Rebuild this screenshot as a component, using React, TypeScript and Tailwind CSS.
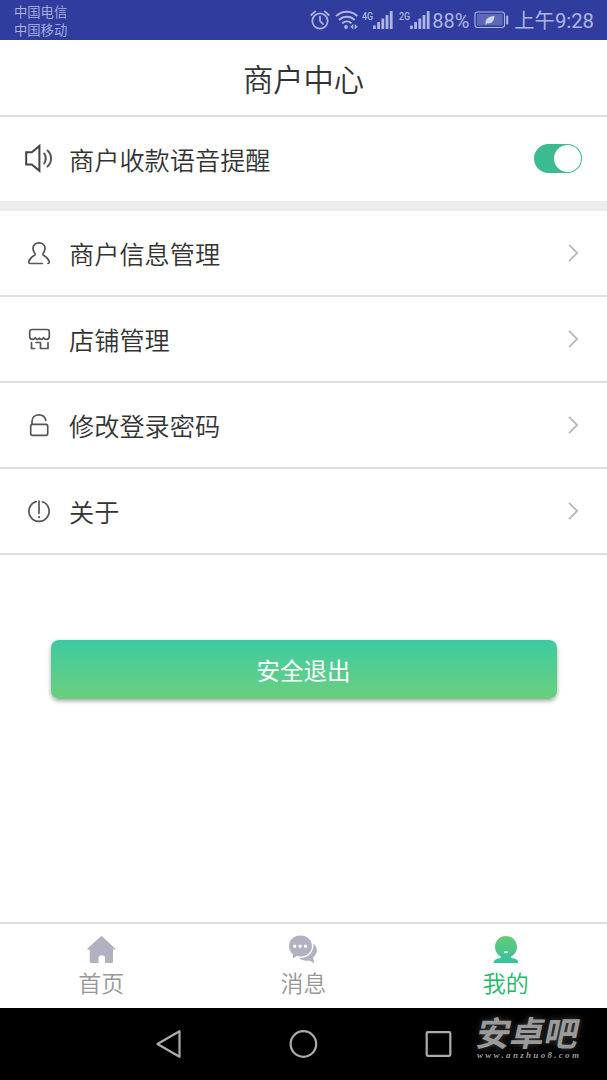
import type { ReactNode } from "react";

interface IconProps {
  children: ReactNode;
}

const RowIcon = ({ children }: IconProps) => (
  <svg
    width="30"
    height="31"
    viewBox="0 0 30 31"
    fill="none"
    stroke="#555"
    strokeWidth="1.7"
    strokeLinecap="round"
    strokeLinejoin="round"
    className="shrink-0"
  >
    {children}
  </svg>
);

const SpeakerIcon = () => (
  <RowIcon>
    <path d="M2.2 9.3h5.6L15.4 3v24.8L7.800 21.500H2.200z" stroke="#444" strokeWidth="2" strokeLinejoin="miter" />
    <path d="M20.200 10.500c2 3.200 2 6.800 0 10M23.500 7.500c4.700 4.200 4.700 11.800 0 16" strokeWidth="2" />
  </RowIcon>
);

const UserIcon = () => (
  <RowIcon>
    <path d="M18.300 25.500H6.200c-1.200 0-1.700-1-1.300-2.200.9-2.800 2.600-4.500 5.300-5.800 1.100-.6 1.100-1.600.4-2.500-1.100-1.400-1.600-2.900-1.600-4.700 0-3.400 2.500-5.500 6-5.500s6 2.100 6 5.500c0 1.800-.5 3.300-1.600 4.700-.7.9-.7 1.900.4 2.500 2.700 1.300 4.400 3 5.300 5.800.4 1.200-.1 2.100-1.200 2.200" />
  </RowIcon>
);

const ShopIcon = () => (
  <RowIcon>
    <path d="M8 5.500h15c1.500 0 2.300.8 2.300 2.300v4.700c0 1.800-1.100 2.800-2.800 2.800-1.500 0-2.300-.5-3-1.600-.6 1.200-1.200 1.700-2.200 1.700s-1.500-.5-1.900-1.300c-.4.8-.9 1.300-1.900 1.300s-1.600-.5-2.200-1.700c-.7 1.100-1.500 1.600-3 1.600-1.600 0-2.600-1-2.600-2.800V7.800C5.700 6.300 6.500 5.500 8 5.500z" />
    <path d="M7.500 18.500v6h3M12 18.500h4.500v6H24v-6" />
  </RowIcon>
);

const LockIcon = () => (
  <RowIcon>
    <rect x="6.700" y="14.300" width="17" height="11" rx="1.800" />
    <path d="M8 14v-2.700C8 7.300 11 4.800 15 4.800c3.500 0 6 2 6.800 5.500" />
  </RowIcon>
);

const AboutIcon = () => (
  <RowIcon>
    <path d="M12.200 5.600a10.100 10.100 0 1 0 6.300.2M15 5v12.300" />
    <path d="M15 21v.3" strokeWidth="2" />
  </RowIcon>
);

const Signal = ({ label }: { label: string }) => (
  <div className="relative h-[22px] w-[33px] shrink-0">
    <span className="absolute left-0 top-0.5 origin-left scale-x-85 font-['Roboto'] text-[10.500px] leading-[11px] font-medium">
      {label}
    </span>
    <svg width="33" height="22" viewBox="0 0 33 22" fill="currentColor">
      <rect x="11" y="16.500" width="2.800" height="3.500" rx=".5" />
      <rect x="15.200" y="13" width="2.800" height="7" rx=".5" />
      <rect x="19.400" y="9.500" width="2.800" height="10.500" rx=".5" />
      <rect x="23.600" y="6" width="2.800" height="14" rx=".5" />
      <rect x="27.800" y="2" width="2.800" height="18" rx=".5" />
    </svg>
  </div>
);

const StatusBar = () => (
  <div className="flex h-10 shrink-0 justify-between bg-[#303d9f] text-[#afb6e2]">
    <div className="pl-3.5 pt-1 text-[13.300px] leading-[18px]">
      <div>中国电信</div>
      <div>中国移动</div>
    </div>
    <div className="flex items-center pr-[13px] font-normal">
      <svg width="20" height="22" viewBox="0 0 20 22" fill="none" stroke="currentColor" strokeWidth="1.700" className="mr-[5px]">
        <circle cx="10" cy="12" r="7.700" />
        <path d="M10 7.500V12l3 3.200M1.200 6 5.300 2.400M14.700 2.400 18.800 6" strokeLinecap="round" />
      </svg>
      <svg width="24" height="22" viewBox="0 0 24 22" fill="none" stroke="currentColor" strokeWidth="1.900" className="mr-[3px]">
        <path d="M1 7.200c6-6 15.500-6 21.500 0M4 11c4.500-4.300 11.200-4.300 15.700 0M7.200 14.400c2.700-2.500 6.600-2.500 9.300 0" />
        <circle cx="11" cy="18" r="1.900" fill="currentColor" stroke="none" />
        <path d="M18.300 15v5.400L15.300 17.700zM19.700 15v5.400l3-2.700z" fill="currentColor" stroke="none" />
      </svg>
      <Signal label="4G" />
      <div className="w-1" />
      <Signal label="2G" />
      <span className="w-[42px] pt-0.5 font-['Roboto'] text-[20px] leading-6">88%</span>
      <svg width="35" height="18" viewBox="0 0 35 18" className="mr-[5px]">
        <rect x="1" y="1" width="29.500" height="15.500" rx="2.500" fill="none" stroke="#afb6e2" strokeWidth="1.100" />
        <rect x="3" y="3" width="25.500" height="11.500" fill="#5d68b7" />
        <rect x="32.200" y="4.500" width="2" height="9" rx=".8" fill="#afb6e2" />
        <path d="M11.500 13.500c-.3-5.500 2-8 9-8.800-.3 5.200-2.500 8.200-7.200 7.600L12.200 13.500z" fill="#cdd2f0" />
      </svg>
      <span className="whitespace-nowrap pt-0.5 text-[20.300px] leading-6">上午9:28</span>
    </div>
  </div>
);

const Toggle = () => (
  <div className="flex h-[29px] w-12 items-center justify-end rounded-full bg-[#3dbb90] p-px">
    <div className="size-[27px] rounded-full bg-white" />
  </div>
);

const menu = [
  { label: "商户信息管理", icon: <UserIcon /> },
  { label: "店铺管理", icon: <ShopIcon /> },
  { label: "修改登录密码", icon: <LockIcon /> },
  { label: "关于", icon: <AboutIcon /> },
];

const tabs = [
  {
    label: "首页",
    color: "text-[#979797]",
    icon: (
      <svg width="30" height="30" viewBox="0 0 30 30" fill="#b1b1c1">
        <path d="M14.700 1.500q.8-.7 1.600 0L29.100 13.500q.6.900-.5 1H27V26.500q0 1.500-1.500 1.500H19v-5.500q0-2-2-2h-2.500q-2 0-2 2V28H5.200q-1.500 0-1.500-1.500V14.500H1.900q-1.100-.1-.5-1z" />
      </svg>
    ),
  },
  {
    label: "消息",
    color: "text-[#979797]",
    icon: (
      <svg width="30" height="30" viewBox="0 0 30 30" fill="#b1b1c1">
        <path d="M25.500 8.500c4.600 4.200 4.400 9.600.3 13.200-.8.7-.8 1.300-.4 2.600l1 4-5.200-2.900c-4 .8-7.500-.2-10.200-2.500 9 .6 15-5.500 14.500-14.400z" />
        <path d="M12.500.5c6.500 0 11.500 4.500 11.500 10.500s-5 10.500-11.500 10.500c-1.300 0-2.500-.2-3.600-.5L4.700 23.500l.3-4.200C2.500 17.300 1 14.400 1 11 1 5 6 .5 12.500.5z" />
        <g fill="#fff">
          <rect x="5.300" y="9.800" width="2.900" height="2.900" rx=".6" />
          <rect x="10.700" y="9.800" width="2.900" height="2.900" rx=".6" />
          <rect x="16.100" y="9.800" width="2.900" height="2.900" rx=".6" />
        </g>
      </svg>
    ),
  },
  {
    label: "我的",
    color: "text-[#1cb968]",
    icon: (
      <svg width="30" height="30" viewBox="0 0 30 30">
        <defs>
          <linearGradient id="me" x1="0" y1="0" x2="0" y2="30" gradientUnits="userSpaceOnUse">
            <stop stopColor="#65cd73" />
            <stop offset="1" stopColor="#35bfa0" />
          </linearGradient>
        </defs>
        <path
          d="M15 1c6.200 0 11 4.700 11 11 0 4.300-2.200 7.500-5.700 9.600-.6 1 0 1.500 1.500 1.700 3.500.4 5.200 1.700 5.700 4.700h-25c.5-3 2.200-4.300 5.700-4.700 1.500-.2 2.100-.7 1.500-1.700C6.200 19.500 4 16.300 4 12 4 5.700 8.800 1 15 1z"
          fill="url(#me)"
        />
        <rect x="13" y="16.500" width="4" height="1.600" fill="#fff" />
      </svg>
    ),
  },
];

const NavBar = () => (
  <div className="relative h-[72px] shrink-0 bg-black">
    <div className="flex h-full items-center justify-center gap-[105px] pr-px">
      <svg width="30" height="30" viewBox="0 0 30 30" fill="none" stroke="#acacac" strokeWidth="2.200" strokeLinejoin="round">
        <path d="M4.500 15 26.500 2.200v25.600z" />
      </svg>
      <svg width="30" height="30" viewBox="0 0 30 30" fill="none" stroke="#acacac" strokeWidth="2.200">
        <circle cx="15.400" cy="15" r="12.800" />
      </svg>
      <svg width="30" height="30" viewBox="0 0 30 30" fill="none" stroke="#acacac" strokeWidth="2.200">
        <rect x="3.700" y="3.200" width="23.600" height="23.600" rx="1" />
      </svg>
    </div>
    <div className="absolute left-[477px] top-[9px] w-[106px] text-[#9a9a9a]">
      <div className="w-max -skew-x-12 text-[34px] leading-[34px] font-bold [text-shadow:0_0_6px_#444]">安卓吧</div>
      <div className="whitespace-nowrap font-['Liberation_Serif'] text-[9px] leading-[9px] font-bold italic tracking-[2.300px]">
        www.anzhuo8.com
      </div>
    </div>
  </div>
);

export default function App() {
  return (
    <div className="flex h-[1080px] w-[607px] flex-col overflow-hidden bg-white font-['Roboto','Noto_Sans_CJK_SC',sans-serif] font-[350] text-[#333]">
      <StatusBar />
      <header className="flex h-[77px] shrink-0 items-center justify-center border-b-2 border-[#dedede] pt-[7px] text-[30.300px]">
        商户中心
      </header>

      <div className="flex h-[84px] shrink-0 items-center pb-0.5 pl-6 pr-[25px]">
        <SpeakerIcon />
        <span className="ml-[15px] flex-1 pt-[7px] text-[25.200px]">商户收款语音提醒</span>
        <Toggle />
      </div>
      <div className="h-2.5 shrink-0 bg-[#ededed]" />

      {menu.map((item) => (
        <div key={item.label} className="flex h-[86px] shrink-0 items-center border-b-2 border-[#dfdfdf] pl-6 pr-7">
          {item.icon}
          <span className="ml-[15px] flex-1 pt-[5px] text-[25.200px]">{item.label}</span>
          <svg width="12" height="20" viewBox="0 0 12 20" fill="none" stroke="#b9b9b9" strokeWidth="1.800">
            <path d="M2 1.800 10.200 10 2 18.200" />
          </svg>
        </div>
      ))}

      <button className="mx-auto mt-[85px] flex h-[59px] w-[506px] shrink-0 items-center justify-center rounded-lg bg-linear-to-b from-[#3bcaa2] to-[#69d07c] pt-[7px] text-[23.500px] font-normal text-white shadow-[0_2px_4px_rgba(0,0,0,0.35)]">
        安全退出
      </button>

      <nav className="mt-auto grid h-[86px] shrink-0 grid-cols-3 border-t-2 border-[#dedede]">
        {tabs.map((tab) => (
          <div key={tab.label} className="flex flex-col items-center pt-[11px]">
            {tab.icon}
            <span className={`mt-[3px] text-[23px] leading-[34px] ${tab.color}`}>{tab.label}</span>
          </div>
        ))}
      </nav>
      <NavBar />
    </div>
  );
}
